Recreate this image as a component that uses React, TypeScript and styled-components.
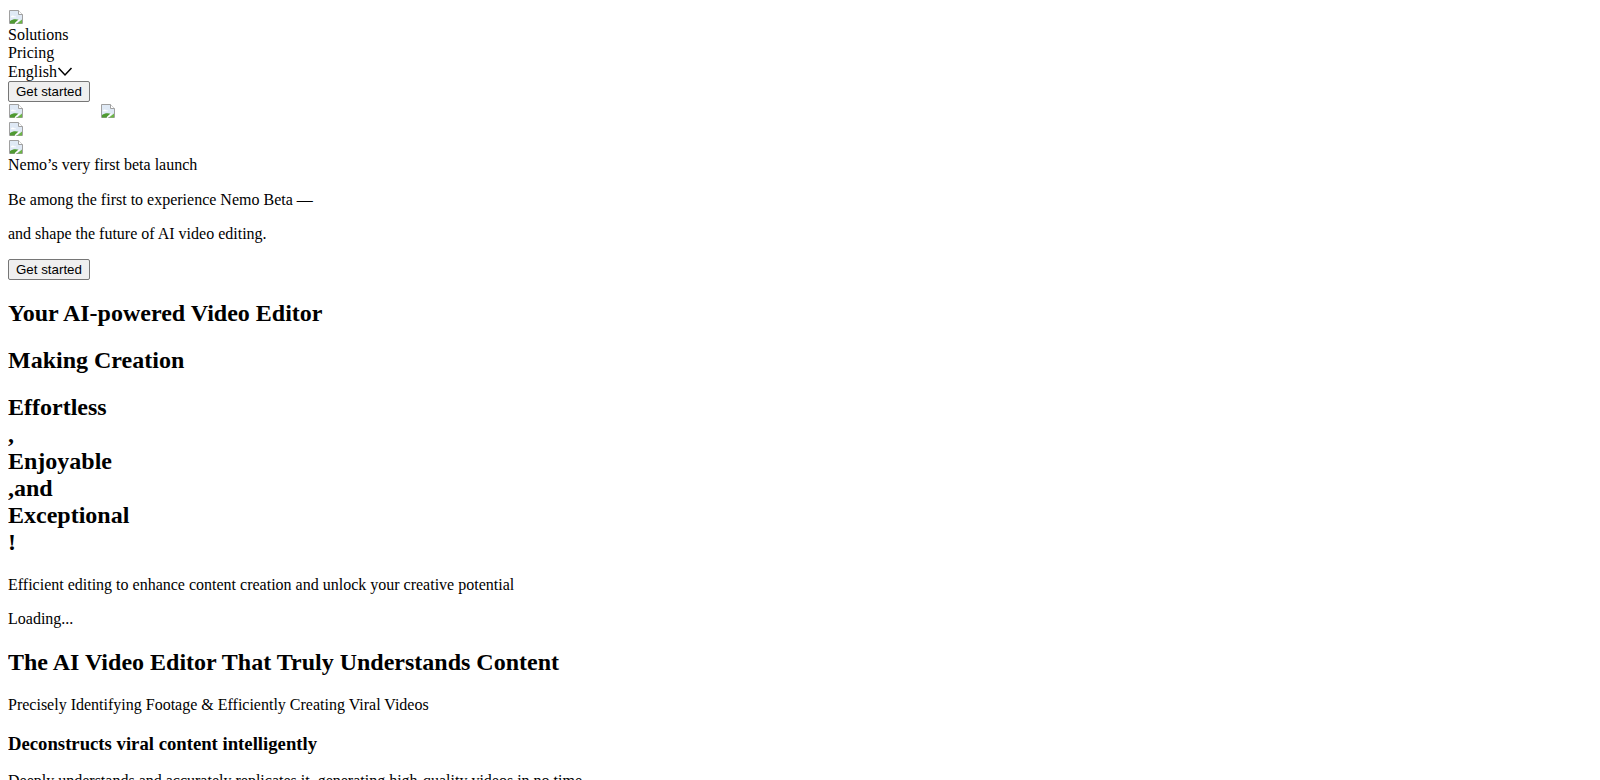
import styled, { createGlobalStyle } from "styled-components";

const GlobalStyle = createGlobalStyle`
  html, body {
    background: #fff;
  }
  body {
    margin: 8px;
    font-family: "Liberation Serif", "Times New Roman", serif;
    font-size: 16px;
    line-height: 1.15;
    color: #000;
  }
`;

const Header = styled.header`
  display: flex;
  flex-direction: column;
  align-items: flex-start;
`;

const ImageLine = styled.div`
  display: flex;
  align-items: flex-start;
  height: 18px;
  padding-top: 1px;
  box-sizing: border-box;
`;

const ImageSlot = styled.div<{ $width?: number }>`
  width: ${(p) => (p.$width ? `${p.$width}px` : "auto")};
  display: flex;
`;

const NavItem = styled.div`
  display: flex;
  align-items: center;
  height: 18.4px;
`;

const LangLabel = styled.span`
  display: inline-flex;
  align-items: flex-end;
`;

const PlainButton = styled.button`
  font-family: "Liberation Sans", Arial, sans-serif;
  font-size: 13.333px;
  line-height: normal;
  color: #000;
  background: #efefef;
  border: 1px solid #767676;
  border-radius: 2px;
  padding: 1px 7px;
  height: 21px;
  margin: 0;
  cursor: default;
`;

// plain block so paragraph margins collapse as in normal flow
const Banner = styled.section`
  display: block;
`;

const Paragraph = styled.p`
  margin: 16px 0;
`;

const Heading = styled.h2`
  font-size: 24px;
  line-height: 27px;
  font-weight: bold;
  margin: 19.92px 0;
`;

const SubHeading = styled.h3`
  font-size: 18.72px;
  line-height: 21px;
  font-weight: bold;
  margin: 18.72px 0;
`;

const BrokenImage = () => (
  <svg width="16" height="16" viewBox="0 0 16 16">
    <path d="M1.5 1.5h9l4 4v9h-13z" fill="#dfe9f5" stroke="#a0a0a0" />
    <path d="M10.5 1.5v4h4" fill="#fff" stroke="#a0a0a0" />
    <path d="M3 7.5c1-1.2 2.6-1.2 3.4 0 .8-.4 1.6 0 1.6.7H3z" fill="#fff" />
    <path d="M2 14.5V12c2.5-1.8 5.5-2.2 9-1.2L7 14.5z" fill="#4f9a32" />
    <path d="M9 14.5l5-4v4z" fill="#6cb545" />
    <path d="M7 14.8l4.5-4.3" stroke="#fff" strokeWidth="1.2" />
  </svg>
);

const Chevron = () => (
  <svg width="16" height="12" viewBox="0 0 16 12">
    <polyline points="1.5,2 8,9 14.5,2" fill="none" stroke="#000" strokeWidth="1.5" />
  </svg>
);

export default function App() {
  return (
    <>
      <GlobalStyle />
      <Header>
        <ImageLine>
          <BrokenImage />
        </ImageLine>
        <NavItem>Solutions</NavItem>
        <NavItem>Pricing</NavItem>
        <NavItem>
          <LangLabel>English</LangLabel>
          <Chevron />
        </NavItem>
        <PlainButton>Get started</PlainButton>
      </Header>
      <ImageLine>
        <ImageSlot $width={92}>
          <BrokenImage />
        </ImageSlot>
        <ImageSlot>
          <BrokenImage />
        </ImageSlot>
      </ImageLine>
      <ImageLine>
        <BrokenImage />
      </ImageLine>
      <ImageLine>
        <BrokenImage />
      </ImageLine>
      <Banner>
        <div>Nemo’s very first beta launch</div>
        <Paragraph>Be among the first to experience Nemo Beta —</Paragraph>
        <Paragraph>and shape the future of AI video editing.</Paragraph>
        <PlainButton>Get started</PlainButton>
      </Banner>
      <Heading>Your AI-powered Video Editor</Heading>
      <Heading>Making Creation</Heading>
      <Heading>
        <div>Effortless</div>,<div>Enjoyable</div>,and<div>Exceptional</div>!
      </Heading>
      <Paragraph>Efficient editing to enhance content creation and unlock your creative potential</Paragraph>
      <Paragraph>Loading...</Paragraph>
      <Heading>The AI Video Editor That Truly Understands Content</Heading>
      <Paragraph>Precisely Identifying Footage &amp; Efficiently Creating Viral Videos</Paragraph>
      <SubHeading>Deconstructs viral content intelligently</SubHeading>
      <Paragraph>
        Deeply understands and accurately replicates it, generating high-quality videos in no time
      </Paragraph>
    </>
  );
}
